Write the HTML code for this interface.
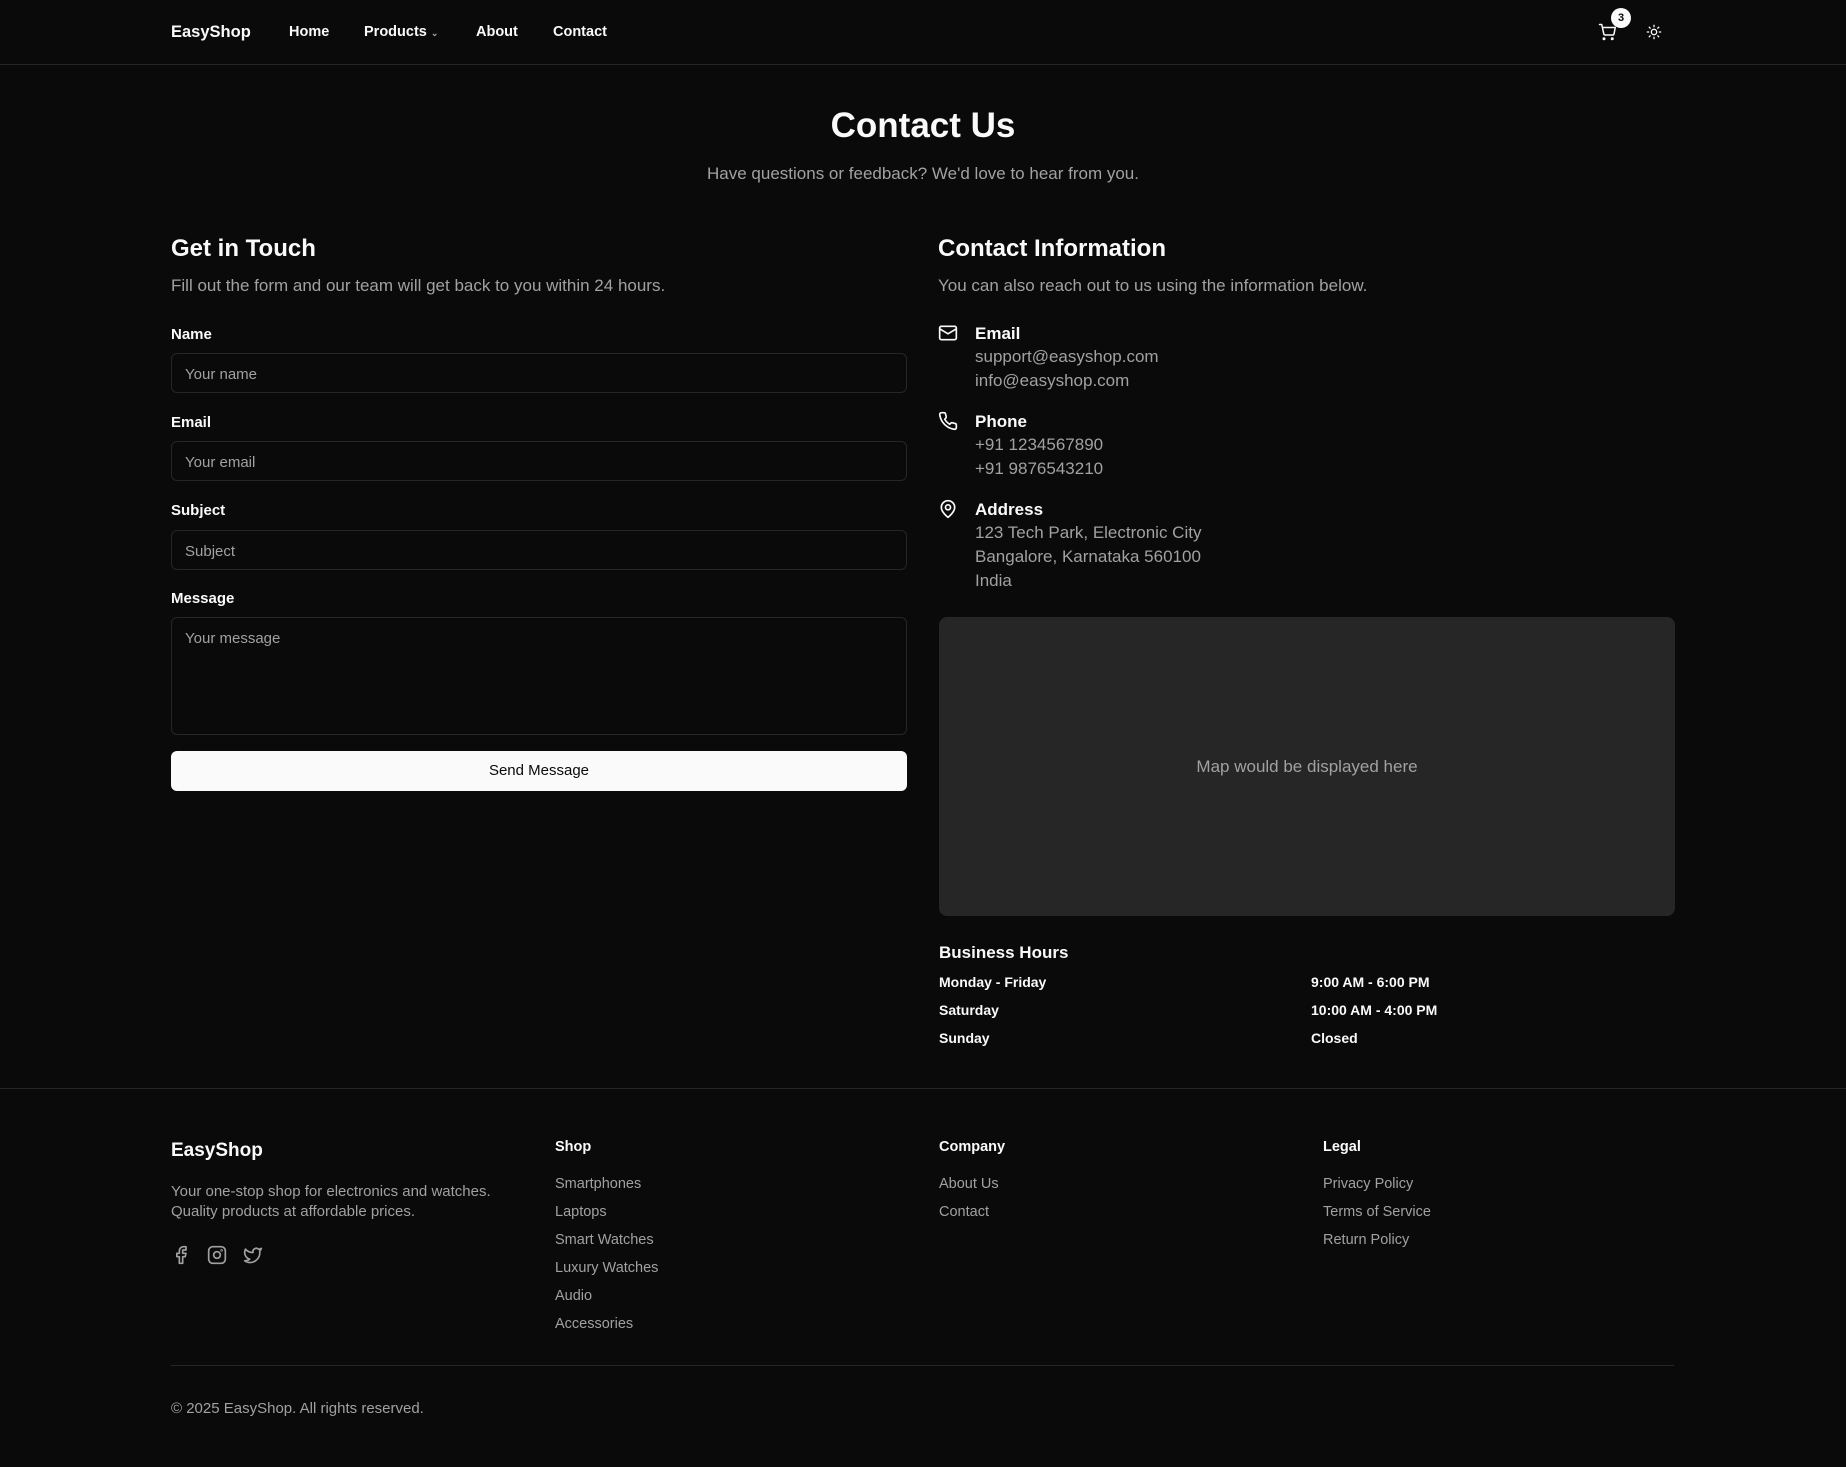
<!DOCTYPE html>
<html><head><meta charset="utf-8"><style>
*{box-sizing:border-box;margin:0;padding:0}
body{width:1846px;height:1467px;background:#0a0a0a;color:#fafafa;font-family:"Liberation Sans",Arial,sans-serif;position:relative;overflow:hidden}
.a{position:absolute;white-space:nowrap;line-height:1}
.m{color:#a1a1a1}
.inp{position:absolute;left:171px;width:736px;height:40px;border:1px solid #262626;border-radius:6px;color:#a1a1a1;font-size:15px;padding:12px 13px;background:#0a0a0a}
.lbl{font-size:15px;font-weight:bold}
.ic{position:absolute;width:20px;height:20px}
</style></head><body>
<div class="a" style="left:0;top:64px;width:1846px;height:1px;background:#262626"></div>
<div class="a" style="left:171px;top:24px;font-size:16.5px;font-weight:bold">EasyShop</div>
<div class="a" style="left:289px;top:25px;font-size:14.5px;font-weight:bold">Home</div>
<div class="a" style="left:364px;top:25px;font-size:14.5px;font-weight:bold">Products <span style="font-size:9px;color:#a1a1a1">&#8964;</span></div>
<div class="a" style="left:476px;top:25px;font-size:14.5px;font-weight:bold">About</div>
<div class="a" style="left:553px;top:25px;font-size:14.5px;font-weight:bold">Contact</div>
<svg class="ic" style="left:1598px;top:23px;width:18px;height:18px" viewBox="0 0 24 24" fill="none" stroke="#fafafa" stroke-width="2" stroke-linecap="round" stroke-linejoin="round"><circle cx="8" cy="21" r="1"/><circle cx="19" cy="21" r="1"/><path d="M2 2h3l2.7 12.4a2 2 0 0 0 2 1.6h9.7a2 2 0 0 0 2-1.6L23 6H6"/></svg>
<div class="a" style="left:1611px;top:8px;width:20px;height:20px;border-radius:10px;background:#fafafa;color:#0a0a0a;font-size:11px;font-weight:bold;text-align:center;line-height:20px">3</div>
<svg class="ic" style="left:1646px;top:24px;width:16px;height:16px" viewBox="0 0 24 24" fill="none" stroke="#fafafa" stroke-width="2" stroke-linecap="round"><circle cx="12" cy="12" r="4"/><path d="M12 2v2M12 20v2M4.9 4.9l1.4 1.4M17.7 17.7l1.4 1.4M2 12h2M20 12h2M6.3 17.7l-1.4 1.4M19.1 4.9l-1.4 1.4"/></svg>

<div class="a" style="left:0;width:1846px;text-align:center;top:108px;font-size:35px;font-weight:bold">Contact Us</div>
<div class="a m" style="left:0;width:1846px;text-align:center;top:165px;font-size:17px">Have questions or feedback? We'd love to hear from you.</div>

<div class="a" style="left:171px;top:237px;font-size:24px;font-weight:bold">Get in Touch</div>
<div class="a m" style="left:171px;top:277px;font-size:17px">Fill out the form and our team will get back to you within 24 hours.</div>
<div class="a lbl" style="left:171px;top:327px">Name</div>
<div class="inp" style="top:353px">Your name</div>
<div class="a lbl" style="left:171px;top:415px">Email</div>
<div class="inp" style="top:441px">Your email</div>
<div class="a lbl" style="left:171px;top:503px">Subject</div>
<div class="inp" style="top:530px">Subject</div>
<div class="a lbl" style="left:171px;top:591px">Message</div>
<div class="inp" style="top:617px;height:118px">Your message</div>
<div class="a" style="left:171px;top:751px;width:736px;height:40px;background:#fafafa;border-radius:6px;color:#0a0a0a;font-size:15px;text-align:center;line-height:40px">Send Message</div>

<div class="a" style="left:938px;top:237px;font-size:24px;font-weight:bold">Contact Information</div>
<div class="a m" style="left:938px;top:277px;font-size:17px">You can also reach out to us using the information below.</div>
<svg class="ic" style="left:938px;top:323px" viewBox="0 0 24 24" fill="none" stroke="#fafafa" stroke-width="2" stroke-linejoin="round"><rect x="2" y="4" width="20" height="16" rx="2"/><path d="M22 7l-10 6L2 7"/></svg>
<div class="a" style="left:975px;top:325px;font-size:17px;font-weight:bold">Email</div>
<div class="a m" style="left:975px;top:345px;font-size:17px;line-height:24px">support@easyshop.com<br>info@easyshop.com</div>
<svg class="ic" style="left:938px;top:411px" viewBox="0 0 24 24" fill="none" stroke="#fafafa" stroke-width="2" stroke-linejoin="round"><path d="M22 16.9v3a2 2 0 0 1-2.2 2 19.8 19.8 0 0 1-8.6-3.1 19.5 19.5 0 0 1-6-6A19.8 19.8 0 0 1 2.1 4.2 2 2 0 0 1 4.1 2h3a2 2 0 0 1 2 1.7c.1 1 .4 1.9.7 2.8a2 2 0 0 1-.5 2.1L8.1 9.9a16 16 0 0 0 6 6l1.3-1.3a2 2 0 0 1 2.1-.4c.9.3 1.8.6 2.8.7a2 2 0 0 1 1.7 2z"/></svg>
<div class="a" style="left:975px;top:413px;font-size:17px;font-weight:bold">Phone</div>
<div class="a m" style="left:975px;top:433px;font-size:17px;line-height:24px">+91 1234567890<br>+91 9876543210</div>
<svg class="ic" style="left:938px;top:499px" viewBox="0 0 24 24" fill="none" stroke="#fafafa" stroke-width="2"><path d="M20 10c0 6-8 12-8 12S4 16 4 10a8 8 0 0 1 16 0z"/><circle cx="12" cy="10" r="3"/></svg>
<div class="a" style="left:975px;top:501px;font-size:17px;font-weight:bold">Address</div>
<div class="a m" style="left:975px;top:521px;font-size:17px;line-height:24px">123 Tech Park, Electronic City<br>Bangalore, Karnataka 560100<br>India</div>
<div class="a" style="left:939px;top:617px;width:736px;height:299px;background:#262626;border-radius:8px"></div>
<div class="a m" style="left:939px;width:736px;text-align:center;top:758px;font-size:17px">Map would be displayed here</div>
<div class="a" style="left:939px;top:944px;font-size:17px;font-weight:bold">Business Hours</div>
<div class="a" style="left:939px;top:968px;font-size:14px;line-height:28px;font-weight:bold">Monday - Friday<br>Saturday<br>Sunday</div>
<div class="a" style="left:1311px;top:968px;font-size:14px;line-height:28px;font-weight:bold">9:00 AM - 6:00 PM<br>10:00 AM - 4:00 PM<br>Closed</div>

<div class="a" style="left:0;top:1088px;width:1846px;height:1px;background:#262626"></div>
<div class="a" style="left:171px;top:1141px;font-size:19px;font-weight:bold">EasyShop</div>
<div class="a m" style="left:171px;top:1182px;font-size:15px;line-height:20px">Your one-stop shop for electronics and watches.<br>Quality products at affordable prices.</div>
<svg class="ic" style="left:171px;top:1245px" viewBox="0 0 24 24" fill="none" stroke="#a1a1a1" stroke-width="2" stroke-linejoin="round"><path d="M18 2h-3a5 5 0 0 0-5 5v3H7v4h3v8h4v-8h3l1-4h-4V7a1 1 0 0 1 1-1h3z"/></svg>
<svg class="ic" style="left:207px;top:1245px" viewBox="0 0 24 24" fill="none" stroke="#a1a1a1" stroke-width="2"><rect x="2" y="2" width="20" height="20" rx="5"/><circle cx="12" cy="12" r="4"/><circle cx="17.5" cy="6.5" r=".5"/></svg>
<svg class="ic" style="left:243px;top:1245px" viewBox="0 0 24 24" fill="none" stroke="#a1a1a1" stroke-width="2" stroke-linejoin="round"><path d="M22 4s-.7 2.1-2 3.4c1.6 10-9.4 17.3-18 11.6 2.2.1 4.4-.6 6-2C3 15.5.5 9.6 3 5c2.2 2.6 5.6 4.1 9 4-.9-4.2 4-6.6 7-3.8 1.1 0 3-1.2 3-1.2z"/></svg>
<div class="a" style="left:555px;top:1140px;font-size:14.5px;font-weight:bold">Shop</div>
<div class="a m" style="left:555px;top:1170px;font-size:14.5px;line-height:28px">Smartphones<br>Laptops<br>Smart Watches<br>Luxury Watches<br>Audio<br>Accessories</div>
<div class="a" style="left:939px;top:1140px;font-size:14.5px;font-weight:bold">Company</div>
<div class="a m" style="left:939px;top:1170px;font-size:14.5px;line-height:28px">About Us<br>Contact</div>
<div class="a" style="left:1323px;top:1140px;font-size:14.5px;font-weight:bold">Legal</div>
<div class="a m" style="left:1323px;top:1170px;font-size:14.5px;line-height:28px">Privacy Policy<br>Terms of Service<br>Return Policy</div>
<div class="a" style="left:171px;top:1365px;width:1503px;height:1px;background:#262626"></div>
<div class="a m" style="left:171px;top:1401px;font-size:15px">© 2025 EasyShop. All rights reserved.</div>
</body></html>
